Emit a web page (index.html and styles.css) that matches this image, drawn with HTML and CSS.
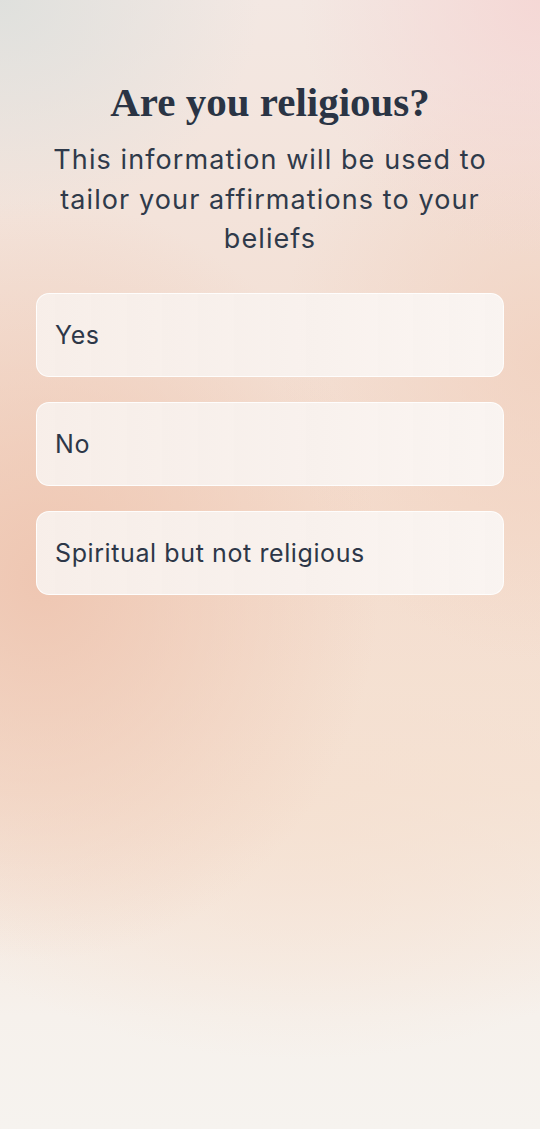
FILE: index.html
```html
<!DOCTYPE html>
<html lang="en">
<head>
    <meta charset="UTF-8">
    <meta name="viewport" content="width=device-width, initial-scale=1.0">
    <title>Are you religious?</title>
    <link rel="stylesheet" href="styles.css">
</head>
<body>

<div class="screen">
    <div class="header">
        <h1 class="title">Are you religious?</h1>
        <p class="subtitle">This information will be used to tailor your affirmations to your beliefs</p>
    </div>

    <div class="options">
        <button type="button" class="option">Yes</button>
        <button type="button" class="option">No</button>
        <button type="button" class="option">Spiritual but not religious</button>
    </div>
</div>

</body>
</html>
```

FILE: styles.css
```css
html, body {
    margin: 0;
    padding: 0;
}
body {
    font-family: Inter, "Open Sans", sans-serif;
    color: #2d3748;
    min-height: 1129px;
    background-color: #f6efe8;
    background-image:
        radial-gradient(ellipse 260px 220px at 0 0, rgba(222, 224, 221, 0.95), rgba(222, 224, 221, 0) 100%),
        radial-gradient(ellipse 240px 260px at 540px 0, rgba(245, 214, 212, 0.9), rgba(245, 214, 212, 0) 100%),
        radial-gradient(ellipse 340px 380px at 40px 580px, rgba(238, 196, 175, 0.9), rgba(238, 196, 175, 0) 100%),
        radial-gradient(ellipse 260px 300px at 540px 360px, rgba(241, 208, 190, 0.75), rgba(241, 208, 190, 0) 100%),
        radial-gradient(ellipse 420px 260px at 300px 800px, rgba(245, 224, 208, 0.8), rgba(245, 224, 208, 0) 100%),
        linear-gradient(180deg, #f3e8e3 0%, #f3e0d5 30%, #f4dccd 45%, #f5e3d6 70%, #f6f1ec 90%, #f6f3ef 100%);
}
.screen {
    padding: 76px 36px 0;
}
.header {
    text-align: center;
}
.title {
    margin: 0;
    font-family: "Liberation Serif", "DejaVu Serif", serif;
    font-weight: 700;
    font-size: 41px;
    line-height: 52px;
    color: #2a3444;
}
.subtitle {
    margin: 12px 0 0;
    font-size: 27px;
    line-height: 39.5px;
    letter-spacing: 1.1px;
    color: #2f3a4a;
}
.options {
    display: flex;
    flex-direction: column;
    gap: 25px;
    margin-top: 34px;
}
.option {
    display: block;
    width: 100%;
    height: 84px;
    padding: 0 18px;
    text-align: left;
    font-family: Inter, "Open Sans", sans-serif;
    font-size: 25px;
    letter-spacing: 0.6px;
    color: #2d3748;
    background-image: linear-gradient(90deg, rgba(250, 238, 231, 0.75), rgba(252, 245, 241, 0.8));
    border: 1.5px solid rgba(255, 255, 255, 0.85);
    border-radius: 13px;
    cursor: pointer;
}
```
